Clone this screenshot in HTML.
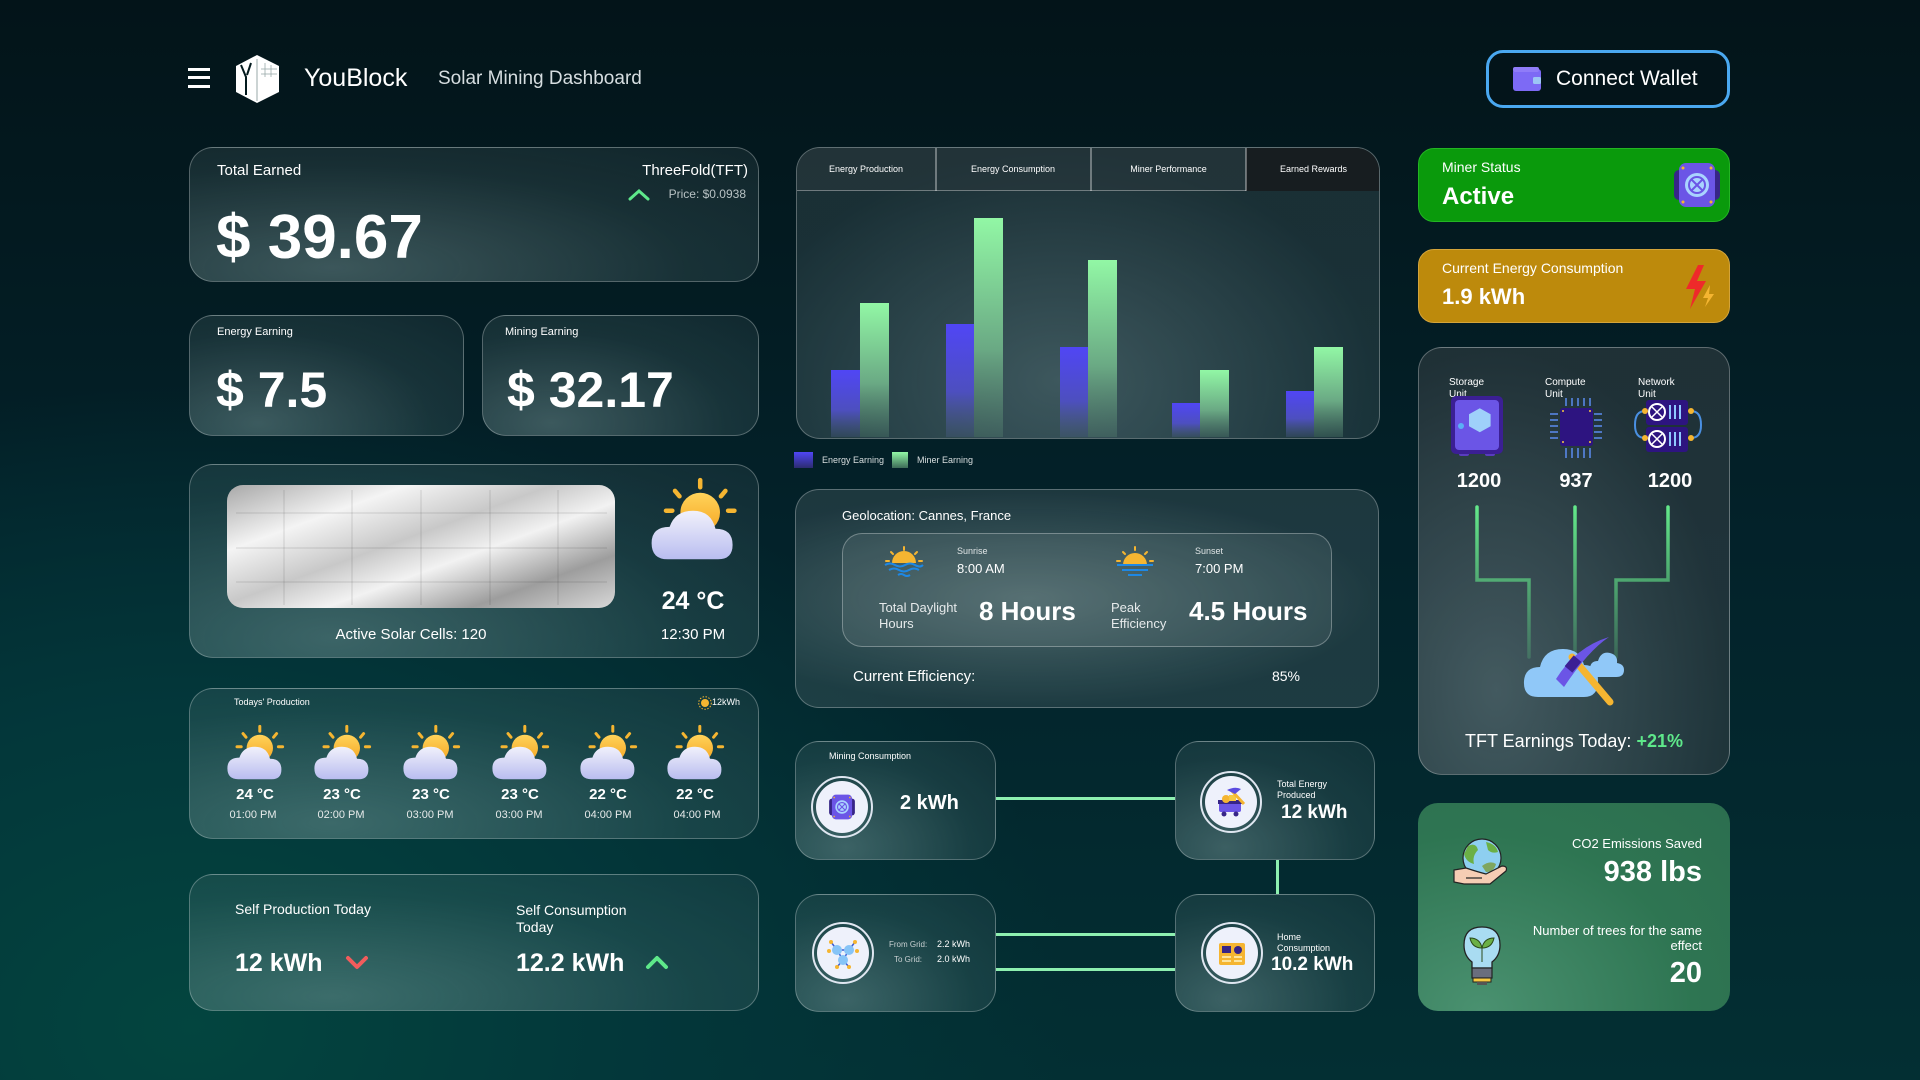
<!DOCTYPE html>
<html><head><meta charset="utf-8">
<style>
*{margin:0;padding:0;box-sizing:border-box}
body{width:1920px;height:1080px;overflow:hidden;font-family:"Liberation Sans",sans-serif;color:#fff;
background:radial-gradient(ellipse 1100px 800px at 10% 95%,#03453f 0%,#03373a 40%,rgba(3,30,36,0) 80%),linear-gradient(180deg,#031419 0%,#03222a 50%,#032f33 100%);position:relative}
.a{position:absolute}
.t{position:absolute;line-height:1;white-space:nowrap}
.card{position:absolute;border-radius:24px;border:1.5px solid rgba(255,255,255,0.28);
background:radial-gradient(ellipse at 25% 90%,rgba(140,170,170,0.42),rgba(120,150,150,0.18) 60%,rgba(100,120,125,0.14));}
.b{font-weight:700}
.ring{position:absolute;width:62px;height:62px;border-radius:50%;border:2px solid #dfe6f0;display:flex;align-items:center;justify-content:center}
.ring>div{width:52px;height:52px;border-radius:50%;background:#eef1fb;display:flex;align-items:center;justify-content:center}
.ln{position:absolute;background:#8ef0b0}
</style></head><body>
<svg width="0" height="0" style="position:absolute">
<defs>
<linearGradient id="sg" x1="0" y1="0" x2="0" y2="1"><stop offset="0" stop-color="#ffd35a"/><stop offset="1" stop-color="#f5a623"/></linearGradient>
<linearGradient id="cg" x1="0" y1="0" x2="0" y2="1"><stop offset="0" stop-color="#f1f1fb"/><stop offset="1" stop-color="#b9bdf0"/></linearGradient>
<symbol id="wx" viewBox="0 0 100 100">
<g stroke="#f5b531" stroke-width="5" stroke-linecap="round">
<line x1="58" y1="4" x2="58" y2="12"/><line x1="30" y1="16" x2="35" y2="22"/><line x1="86" y1="16" x2="81" y2="22"/><line x1="20" y1="38" x2="27" y2="38"/><line x1="96" y1="38" x2="89" y2="38"/></g>
<circle cx="58" cy="40" r="22" fill="url(#sg)"/>
<path d="M22 92 Q4 92 4 74 Q4 56 24 56 Q30 38 50 38 Q70 38 75 58 Q94 58 94 76 Q94 92 78 92 Z" fill="url(#cg)"/>
</symbol>
<symbol id="miner" viewBox="0 0 50 50">
<rect x="2" y="10" width="46" height="30" rx="5" fill="#372587"/>
<rect x="7" y="3" width="36" height="44" rx="7" fill="#6b55e6"/>
<circle cx="25" cy="25" r="12" fill="#a9d3ff"/><circle cx="25" cy="25" r="8" fill="none" stroke="#6b55e6" stroke-width="2"/>
<path d="M19 19 L31 31 M31 19 L19 31" stroke="#6b55e6" stroke-width="2"/>
<g fill="#f5b531"><circle cx="11" cy="8" r="1.5"/><circle cx="39" cy="8" r="1.5"/><circle cx="11" cy="42" r="1.5"/><circle cx="39" cy="42" r="1.5"/></g>
</symbol>
<linearGradient id="bl" x1="0" y1="0" x2="0" y2="1"><stop offset="0" stop-color="#5046f5"/><stop offset="0.6" stop-color="#4d4fbf"/><stop offset="1" stop-color="#4c5e8a" stop-opacity="0.3"/></linearGradient>
<linearGradient id="gr" x1="0" y1="0" x2="0" y2="1"><stop offset="0" stop-color="#92f7a5"/><stop offset="0.6" stop-color="#6aa984"/><stop offset="1" stop-color="#5b8a75" stop-opacity="0.3"/></linearGradient>
</defs></svg>

<!-- header -->
<div class="a" style="left:188px;top:68px;width:22px;height:2.5px;background:#fff"></div>
<div class="a" style="left:188px;top:76px;width:22px;height:2.5px;background:#fff"></div>
<div class="a" style="left:188px;top:85px;width:22px;height:2.5px;background:#fff"></div>
<svg class="a" style="left:235px;top:55px" width="45" height="48" viewBox="0 0 45 48">
<path d="M22 0 L44 11 L44 37 L22 48 L1 37 L1 11 Z" fill="#fff"/>
<path d="M6 10 L11 22 L11 40 M16 8 L12 20" stroke="#031a1e" stroke-width="2" fill="none"/>
<line x1="22" y1="4" x2="22" y2="46" stroke="#9aa" stroke-width="1"/>
<g stroke="#9aa" stroke-width="0.8"><line x1="30" y1="8" x2="30" y2="22"/><line x1="36" y1="10" x2="36" y2="22"/><line x1="26" y1="14" x2="42" y2="14"/><line x1="26" y1="19" x2="42" y2="19"/></g>
</svg>
<div class="t" style="left:304px;top:66px;font-size:25px;font-weight:500">YouBlock</div>
<div class="t" style="left:438px;top:69px;font-size:19px;color:#d6dde0;font-weight:300">Solar Mining Dashboard</div>
<div class="a" style="left:1486px;top:50px;width:244px;height:58px;border:3px solid #4aa8f0;border-radius:17px;background:#03141a"></div>
<svg class="a" style="left:1513px;top:67px" width="28" height="24" viewBox="0 0 28 24"><rect x="0" y="2" width="28" height="22" rx="3" fill="#7d6af5"/><rect x="0" y="0" width="26" height="5" rx="2" fill="#8f7cf8"/><rect x="20" y="10" width="8" height="7" rx="1.5" fill="#9cc5f5"/></svg>
<div class="t" style="left:1556px;top:68px;font-size:21px;font-weight:500">Connect Wallet</div>

<!-- total earned -->
<div class="card" style="left:189px;top:147px;width:570px;height:135px"></div>
<div class="t" style="left:217px;top:163px;font-size:15px">Total Earned</div>
<div class="t" style="left:600px;width:148px;text-align:right;top:163px;font-size:15px">ThreeFold(TFT)</div>
<svg class="a" style="left:628px;top:189px" width="22" height="12" viewBox="0 0 22 12"><path d="M2 10 L11 2 L20 10" stroke="#5ee88a" stroke-width="3" fill="none" stroke-linecap="round"/></svg>
<div class="t" style="left:600px;width:146px;text-align:right;top:188px;font-size:12px;color:#b8c2c4">Price: $0.0938</div>
<div class="t b" style="left:216px;top:207px;font-size:62px">$ 39.67</div>

<div class="card" style="left:189px;top:315px;width:275px;height:121px"></div>
<div class="t" style="left:217px;top:327px;font-size:11px">Energy Earning</div>
<div class="t b" style="left:216px;top:365px;font-size:50px">$ 7.5</div>
<div class="card" style="left:482px;top:315px;width:277px;height:121px"></div>
<div class="t" style="left:505px;top:327px;font-size:11px">Mining Earning</div>
<div class="t b" style="left:507px;top:365px;font-size:50px">$ 32.17</div>

<!-- solar -->
<div class="card" style="left:189px;top:464px;width:570px;height:194px"></div>
<div class="a" style="left:227px;top:485px;width:388px;height:123px;border-radius:16px;overflow:hidden;background:linear-gradient(160deg,#a8a8a8 0%,#f4f4f4 25%,#c8c8c8 45%,#f2f2f2 60%,#9d9d9d 80%,#d8d8d8 100%)">
<svg width="388" height="123" style="position:absolute;left:0;top:0"><g stroke="rgba(0,0,0,0.13)" stroke-width="1"><line x1="57" y1="5" x2="57" y2="120"/><line x1="125" y1="5" x2="125" y2="120"/><line x1="194" y1="5" x2="194" y2="120"/><line x1="263" y1="5" x2="263" y2="120"/><line x1="331" y1="5" x2="331" y2="120"/><line x1="9" y1="28" x2="380" y2="28"/><line x1="9" y1="63" x2="380" y2="63"/><line x1="9" y1="97" x2="380" y2="97"/></g></svg></div>
<div class="t" style="left:311px;width:200px;text-align:center;top:627px;font-size:15px">Active Solar Cells: 120</div>
<svg class="a" style="left:648px;top:474px" width="90" height="95"><use href="#wx"/></svg>
<div class="t" style="left:620px;width:146px;text-align:center;top:589px;font-size:25px;font-weight:600">24 °C</div>
<div class="t" style="left:620px;width:146px;text-align:center;top:627px;font-size:15px">12:30 PM</div>

<!-- production -->
<div class="card" style="left:189px;top:688px;width:570px;height:151px"></div>
<div class="t" style="left:234px;top:698px;font-size:9px">Todays' Production</div>
<svg class="a" style="left:698px;top:696px" width="14" height="14" viewBox="0 0 14 14"><circle cx="7" cy="7" r="4" fill="#f5b531"/><circle cx="7" cy="7" r="6.3" fill="none" stroke="#f5b531" stroke-dasharray="1.5 1.5"/></svg>
<div class="t" style="left:712px;top:698px;font-size:9px">12kWh</div>
<svg class="a" style="left:225px;top:722px" width="60" height="64"><use href="#wx"/></svg>
<svg class="a" style="left:312px;top:722px" width="60" height="64"><use href="#wx"/></svg>
<svg class="a" style="left:401px;top:722px" width="60" height="64"><use href="#wx"/></svg>
<svg class="a" style="left:490px;top:722px" width="60" height="64"><use href="#wx"/></svg>
<svg class="a" style="left:578px;top:722px" width="60" height="64"><use href="#wx"/></svg>
<svg class="a" style="left:665px;top:722px" width="60" height="64"><use href="#wx"/></svg>
<div class="t b" style="left:215px;width:80px;text-align:center;top:787px;font-size:15px">24 °C</div>
<div class="t b" style="left:302px;width:80px;text-align:center;top:787px;font-size:15px">23 °C</div>
<div class="t b" style="left:391px;width:80px;text-align:center;top:787px;font-size:15px">23 °C</div>
<div class="t b" style="left:480px;width:80px;text-align:center;top:787px;font-size:15px">23 °C</div>
<div class="t b" style="left:568px;width:80px;text-align:center;top:787px;font-size:15px">22 °C</div>
<div class="t b" style="left:655px;width:80px;text-align:center;top:787px;font-size:15px">22 °C</div>
<div class="t" style="left:213px;width:80px;text-align:center;top:810px;font-size:11px;color:#e6eaea">01:00 PM</div>
<div class="t" style="left:301px;width:80px;text-align:center;top:810px;font-size:11px;color:#e6eaea">02:00 PM</div>
<div class="t" style="left:390px;width:80px;text-align:center;top:810px;font-size:11px;color:#e6eaea">03:00 PM</div>
<div class="t" style="left:479px;width:80px;text-align:center;top:810px;font-size:11px;color:#e6eaea">03:00 PM</div>
<div class="t" style="left:568px;width:80px;text-align:center;top:810px;font-size:11px;color:#e6eaea">04:00 PM</div>
<div class="t" style="left:657px;width:80px;text-align:center;top:810px;font-size:11px;color:#e6eaea">04:00 PM</div>

<!-- self -->
<div class="card" style="left:189px;top:874px;width:570px;height:137px"></div>
<div class="t" style="left:235px;top:902px;font-size:14px">Self Production Today</div>
<div class="t" style="left:516px;top:902px;font-size:14px;line-height:17px;white-space:normal;width:130px">Self Consumption Today</div>
<div class="t b" style="left:235px;top:951px;font-size:25px">12 kWh</div>
<svg class="a" style="left:345px;top:955px" width="24" height="15" viewBox="0 0 24 15"><path d="M3 3 L12 12 L21 3" stroke="#f25c5c" stroke-width="4" fill="none" stroke-linecap="round" stroke-linejoin="round"/></svg>
<div class="t b" style="left:516px;top:951px;font-size:25px">12.2 kWh</div>
<svg class="a" style="left:645px;top:955px" width="24" height="15" viewBox="0 0 24 15"><path d="M3 12 L12 3 L21 12" stroke="#5ee88a" stroke-width="4" fill="none" stroke-linecap="round" stroke-linejoin="round"/></svg>

<!-- chart -->
<div class="card" style="left:796px;top:147px;width:584px;height:292px;overflow:hidden;background:radial-gradient(ellipse at 45% 80%,rgba(120,145,150,0.5),rgba(70,90,95,0.35) 70%)">
<div class="a" style="left:0;top:0;width:584px;height:43px;border-bottom:1.5px solid rgba(255,255,255,0.35);background:rgba(40,55,60,0.6)"></div>
<div class="a" style="left:449px;top:0;width:135px;height:43px;background:#171d20"></div>
<div class="a" style="left:138px;top:0;width:1.5px;height:43px;background:rgba(255,255,255,0.35)"></div>
<div class="a" style="left:293px;top:0;width:1.5px;height:43px;background:rgba(255,255,255,0.35)"></div>
<div class="a" style="left:448px;top:0;width:1.5px;height:43px;background:rgba(255,255,255,0.35)"></div>
<div class="t" style="left:0;width:138px;text-align:center;top:17px;font-size:9px">Energy Production</div>
<div class="t" style="left:139px;width:154px;text-align:center;top:17px;font-size:9px">Energy Consumption</div>
<div class="t" style="left:294px;width:155px;text-align:center;top:17px;font-size:9px">Miner Performance</div>
<div class="t" style="left:449px;width:135px;text-align:center;top:17px;font-size:9px">Earned Rewards</div>
</div>
<svg class="a" style="left:796px;top:147px" width="584" height="292">
<rect x="35" y="223" width="29" height="67" fill="url(#bl)"/><rect x="64" y="156" width="29" height="134" fill="url(#gr)"/>
<rect x="150" y="177" width="28" height="113" fill="url(#bl)"/><rect x="178" y="71" width="29" height="219" fill="url(#gr)"/>
<rect x="264" y="200" width="28" height="90" fill="url(#bl)"/><rect x="292" y="113" width="29" height="177" fill="url(#gr)"/>
<rect x="376" y="256" width="28" height="34" fill="url(#bl)"/><rect x="404" y="223" width="29" height="67" fill="url(#gr)"/>
<rect x="490" y="244" width="28" height="46" fill="url(#bl)"/><rect x="518" y="200" width="29" height="90" fill="url(#gr)"/>
</svg>
<div class="a" style="left:794px;top:452px;width:19px;height:16px;background:linear-gradient(#5046f5,#2c2c70)"></div>
<div class="t" style="left:822px;top:456px;font-size:9px;color:#d9dfe0">Energy Earning</div>
<div class="a" style="left:892px;top:452px;width:16px;height:16px;background:linear-gradient(#92f7a5,#3d6c58)"></div>
<div class="t" style="left:917px;top:456px;font-size:9px;color:#d9dfe0">Miner Earning</div>

<!-- geo -->
<div class="card" style="left:795px;top:489px;width:584px;height:219px;background:radial-gradient(ellipse at 40% 50%,rgba(150,170,170,0.5),rgba(90,110,115,0.3) 70%)"></div>
<div class="t" style="left:842px;top:509px;font-size:13px">Geolocation: Cannes, France</div>
<div class="a" style="left:842px;top:533px;width:490px;height:114px;border-radius:20px;border:1.5px solid rgba(255,255,255,0.3);background:rgba(150,165,168,0.15)"></div>
<svg class="a" style="left:884px;top:545px" width="40" height="32" viewBox="0 0 40 32"><g stroke="#f5b531" stroke-width="2" stroke-linecap="round"><line x1="20" y1="2" x2="20" y2="5"/><line x1="7" y1="7" x2="9" y2="9"/><line x1="33" y1="7" x2="31" y2="9"/><line x1="2" y1="16" x2="5" y2="16"/><line x1="35" y1="16" x2="38" y2="16"/></g><path d="M8 18 A12 12 0 0 1 32 18 Z" fill="#f5b531"/><g stroke="#1e88e5" stroke-width="2" fill="none"><path d="M1 20 q5 -3 10 0 t10 0 t10 0 t8 0"/><path d="M5 25 q5 -3 10 0 t10 0 t10 0"/><path d="M14 30 q3 -2 6 0 t6 0"/></g></svg>
<div class="t" style="left:957px;top:547px;font-size:9px;color:#e0e5e6">Sunrise</div>
<div class="t" style="left:957px;top:562px;font-size:13px">8:00 AM</div>
<svg class="a" style="left:1116px;top:545px" width="38" height="32" viewBox="0 0 38 32"><g stroke="#f5b531" stroke-width="2" stroke-linecap="round"><line x1="19" y1="2" x2="19" y2="5"/><line x1="7" y1="7" x2="9" y2="9"/><line x1="31" y1="7" x2="29" y2="9"/><line x1="1" y1="16" x2="4" y2="16"/><line x1="34" y1="16" x2="37" y2="16"/></g><path d="M7 20 A12 12 0 0 1 31 20 Z" fill="#f5b531"/><g stroke="#1e88e5" stroke-width="2"><line x1="1" y1="20" x2="37" y2="20"/><line x1="6" y1="25" x2="32" y2="25"/><line x1="12" y1="30" x2="26" y2="30"/></g></svg>
<div class="t" style="left:1195px;top:547px;font-size:9px;color:#e0e5e6">Sunset</div>
<div class="t" style="left:1195px;top:562px;font-size:13px">7:00 PM</div>
<div class="t" style="left:879px;top:600px;font-size:13px;line-height:16px;color:#e6eaeb">Total Daylight<br>Hours</div>
<div class="t" style="left:979px;top:598px;font-size:26px;font-weight:600">8 Hours</div>
<div class="t" style="left:1111px;top:600px;font-size:13px;line-height:16px;color:#e6eaeb">Peak<br>Efficiency</div>
<div class="t" style="left:1189px;top:598px;font-size:26px;font-weight:600">4.5 Hours</div>
<div class="t" style="left:853px;top:669px;font-size:15px">Current Efficiency:</div>
<div class="t" style="left:1230px;width:70px;text-align:right;top:669px;font-size:14px">85%</div>

<!-- flows -->
<div class="ln" style="left:996px;top:797px;width:179px;height:3px"></div>
<div class="ln" style="left:1276px;top:860px;width:3px;height:34px"></div>
<div class="ln" style="left:996px;top:933px;width:179px;height:3px"></div>
<div class="ln" style="left:996px;top:968px;width:179px;height:3px"></div>
<div class="card" style="left:795px;top:741px;width:201px;height:119px"></div>
<div class="card" style="left:1175px;top:741px;width:200px;height:119px"></div>
<div class="card" style="left:795px;top:894px;width:201px;height:118px"></div>
<div class="card" style="left:1175px;top:894px;width:200px;height:118px"></div>
<div class="t" style="left:829px;top:752px;font-size:9px">Mining Consumption</div>
<div class="ring" style="left:811px;top:776px"><div><svg width="28" height="28"><use href="#miner"/></svg></div></div>
<div class="t b" style="left:900px;top:793px;font-size:20px">2 kWh</div>
<div class="ring" style="left:1200px;top:771px"><div><svg width="36" height="36" viewBox="0 0 36 36"><rect x="6" y="18" width="22" height="10" rx="2" fill="#6b55e6"/><rect x="5" y="16" width="24" height="4" fill="#372587"/><circle cx="11" cy="30" r="2.5" fill="#372587"/><circle cx="23" cy="30" r="2.5" fill="#372587"/><circle cx="13" cy="15" r="4" fill="#f5b531"/><rect x="16" y="11" width="7" height="6" fill="#f5c842"/><path d="M18 6 L31 20" stroke="#f5b531" stroke-width="3"/><path d="M14 6 Q22 2 28 5 L22 10 Z" fill="#5b4be0"/></svg></div></div>
<div class="t" style="left:1277px;top:779px;font-size:9px;line-height:11px">Total Energy<br>Produced</div>
<div class="t b" style="left:1281px;top:803px;font-size:19px">12 kWh</div>
<div class="ring" style="left:812px;top:922px"><div><svg width="40" height="40" viewBox="0 0 40 40"><g stroke="#3b5bd4" stroke-width="1.5"><line x1="14" y1="17" x2="26" y2="17"/><line x1="14" y1="17" x2="20" y2="27"/><line x1="26" y1="17" x2="20" y2="27"/><line x1="14" y1="17" x2="8" y2="9"/><line x1="26" y1="17" x2="32" y2="9"/><line x1="20" y1="27" x2="14" y2="34"/><line x1="20" y1="27" x2="26" y2="34"/></g><circle cx="14" cy="17" r="5" fill="#86c4f7"/><circle cx="26" cy="17" r="5" fill="#86c4f7"/><circle cx="20" cy="27" r="5" fill="#86c4f7"/><g fill="#f5b531"><circle cx="8" cy="9" r="2"/><circle cx="32" cy="9" r="2"/><circle cx="14" cy="34" r="2"/><circle cx="26" cy="34" r="2"/><circle cx="6" cy="18" r="2"/><circle cx="34" cy="18" r="2"/></g></svg></div></div>
<div class="t" style="left:889px;top:941px;font-size:8px;color:#c8d0d2">From Grid:</div>
<div class="t" style="left:937px;top:940px;font-size:9px">2.2 kWh</div>
<div class="t" style="left:894px;top:956px;font-size:8px;color:#c8d0d2">To Grid:</div>
<div class="t" style="left:937px;top:955px;font-size:9px">2.0 kWh</div>
<div class="ring" style="left:1201px;top:922px"><div><svg width="36" height="36" viewBox="0 0 36 36"><rect x="5" y="8" width="26" height="22" rx="2" fill="#f5b531"/><rect x="8" y="11" width="9" height="7" fill="#372587"/><circle cx="24" cy="15" r="4" fill="#372587"/><g stroke="#fff3c4" stroke-width="1.5"><line x1="8" y1="22" x2="17" y2="22"/><line x1="8" y1="26" x2="17" y2="26"/><line x1="20" y1="22" x2="28" y2="22"/><line x1="20" y1="26" x2="28" y2="26"/></g></svg></div></div>
<div class="t" style="left:1277px;top:932px;font-size:9px;line-height:11px">Home<br>Consumption</div>
<div class="t b" style="left:1271px;top:955px;font-size:19px">10.2 kWh</div>

<!-- right column -->
<div class="a" style="left:1418px;top:148px;width:312px;height:74px;border-radius:16px;background:#0a9a0c;border:1px solid #23b523"></div>
<div class="t" style="left:1442px;top:160px;font-size:14px">Miner Status</div>
<div class="t b" style="left:1442px;top:185px;font-size:24px">Active</div>
<svg class="a" style="left:1672px;top:158px" width="50" height="54"><use href="#miner"/></svg>
<div class="a" style="left:1418px;top:249px;width:312px;height:74px;border-radius:16px;background:#bd8a0c;border:1px solid #d4a43a"></div>
<div class="t" style="left:1442px;top:261px;font-size:14px">Current Energy Consumption</div>
<div class="t b" style="left:1442px;top:286px;font-size:22px">1.9 kWh</div>
<svg class="a" style="left:1684px;top:265px" width="32" height="44" viewBox="0 0 32 44"><path d="M14 0 L2 24 L11 24 L6 44 L22 16 L13 16 L20 0 Z" fill="#ee2a2a"/><path d="M26 20 L19 33 L24 33 L21 42 L30 29 L25 29 Z" fill="#f5b531"/></svg>

<div class="card" style="left:1418px;top:347px;width:312px;height:428px;background:radial-gradient(ellipse at 25% 80%,rgba(110,125,130,0.6),rgba(55,65,70,0.55) 70%)"></div>
<div class="t" style="left:1449px;top:377px;font-size:10px;line-height:12px">Storage<br>Unit</div>
<div class="t" style="left:1545px;top:377px;font-size:10px;line-height:12px">Compute<br>Unit</div>
<div class="t" style="left:1638px;top:377px;font-size:10px;line-height:12px">Network<br>Unit</div>
<svg class="a" style="left:1451px;top:396px" width="53" height="64" viewBox="0 0 53 64"><rect x="8" y="54" width="10" height="6" rx="2" fill="#5a3cc0"/><rect x="34" y="54" width="10" height="6" rx="2" fill="#5a3cc0"/><rect x="0" y="0" width="52" height="58" rx="5" fill="#3b1f94"/><rect x="4" y="4" width="44" height="50" rx="4" fill="#6b55e6"/><path d="M29 14 L38 19 L38 29 L29 34 L20 29 L20 19 Z" fill="#9fd0fa" transform="translate(0,-1) scale(1.2) translate(-5,-3)"/><circle cx="10" cy="30" r="3" fill="#5ab0f5"/></svg>
<svg class="a" style="left:1548px;top:396px" width="56" height="64" viewBox="0 0 56 64"><g stroke="#5b8cf0" stroke-width="1.5"><line x1="18" y1="2" x2="18" y2="10"/><line x1="24" y1="2" x2="24" y2="10"/><line x1="30" y1="2" x2="30" y2="10"/><line x1="36" y1="2" x2="36" y2="10"/><line x1="42" y1="2" x2="42" y2="10"/><line x1="18" y1="52" x2="18" y2="62"/><line x1="24" y1="52" x2="24" y2="62"/><line x1="30" y1="52" x2="30" y2="62"/><line x1="36" y1="52" x2="36" y2="62"/><line x1="42" y1="52" x2="42" y2="62"/><line x1="2" y1="18" x2="10" y2="18"/><line x1="2" y1="24" x2="10" y2="24"/><line x1="2" y1="30" x2="10" y2="30"/><line x1="2" y1="36" x2="10" y2="36"/><line x1="2" y1="42" x2="10" y2="42"/><line x1="46" y1="18" x2="54" y2="18"/><line x1="46" y1="24" x2="54" y2="24"/><line x1="46" y1="30" x2="54" y2="30"/><line x1="46" y1="36" x2="54" y2="36"/><line x1="46" y1="42" x2="54" y2="42"/></g><rect x="12" y="12" width="33" height="38" rx="3" fill="#2d1480"/><g fill="#f5c842"><circle cx="15" cy="15" r="1"/><circle cx="42" cy="15" r="1"/><circle cx="15" cy="46" r="1"/><circle cx="42" cy="46" r="1"/></g></svg>
<svg class="a" style="left:1633px;top:398px" width="70" height="56" viewBox="0 0 70 56"><path d="M12 13 Q2 13 2 27 Q2 40 12 40" stroke="#4a90e2" stroke-width="2" fill="none"/><path d="M58 13 Q68 13 68 27 Q68 40 58 40" stroke="#4a90e2" stroke-width="2" fill="none"/><rect x="13" y="2" width="42" height="25" rx="3" fill="#2d1480"/><rect x="13" y="29" width="42" height="25" rx="3" fill="#2d1480"/><g fill="none" stroke="#fff" stroke-width="2"><circle cx="24" cy="14" r="8"/><circle cx="24" cy="41" r="8"/></g><g stroke="#fff" stroke-width="1.5"><path d="M19 9 L29 19 M29 9 L19 19 M19 36 L29 46 M29 36 L19 46"/></g><g stroke="#8ec8ff" stroke-width="2"><line x1="37" y1="7" x2="37" y2="21"/><line x1="42" y1="7" x2="42" y2="21"/><line x1="47" y1="7" x2="47" y2="21"/><line x1="37" y1="34" x2="37" y2="48"/><line x1="42" y1="34" x2="42" y2="48"/><line x1="47" y1="34" x2="47" y2="48"/></g><g fill="#f5b531"><circle cx="12" cy="13" r="3"/><circle cx="58" cy="13" r="3"/><circle cx="12" cy="40" r="3"/><circle cx="58" cy="40" r="3"/></g></svg>
<div class="t b" style="left:1439px;width:80px;text-align:center;top:471px;font-size:20px">1200</div>
<div class="t b" style="left:1536px;width:80px;text-align:center;top:471px;font-size:20px">937</div>
<div class="t b" style="left:1630px;width:80px;text-align:center;top:471px;font-size:20px">1200</div>
<svg class="a" style="left:1418px;top:347px" width="312" height="428">
<defs><linearGradient id="lg" gradientUnits="userSpaceOnUse" x1="0" y1="160" x2="0" y2="320"><stop offset="0" stop-color="#63e88a"/><stop offset="1" stop-color="#63e88a" stop-opacity="0.15"/></linearGradient></defs>
<g stroke="url(#lg)" stroke-width="3.5" fill="none" stroke-linecap="round"><path d="M59 160 L59 233 L111 233 L111 310" /><path d="M157 160 L157 310"/><path d="M250 160 L250 233 L198 233 L198 310"/></g>
<g transform="translate(80,0)">
<path d="M40 350 Q25 350 26 334 Q27 320 42 320 Q46 302 65 302 Q82 302 86 318 Q100 318 100 334 Q100 350 86 350 Z" fill="#90c8f8"/>
<path d="M100 330 Q92 330 92 322 Q92 314 100 314 Q103 304 112 306 Q120 308 119 316 Q126 317 126 323 Q126 330 118 330 Z" fill="#90c8f8"/>
<path d="M74 310 L112 355" stroke="#f5b531" stroke-width="7" stroke-linecap="round"/>
<path d="M58 332 Q78 300 111 290 Q90 304 66 340 Z" fill="#6b55e6"/>
<rect x="70" y="310" width="10" height="14" fill="#3b1f94" transform="rotate(40 75 317)"/>
</g>
</svg>
<div class="t" style="left:1418px;width:312px;text-align:center;top:732px;font-size:18px">TFT Earnings Today: <span style="color:#5ee88a;font-weight:700">+21%</span></div>

<div class="a" style="left:1418px;top:803px;width:312px;height:208px;border-radius:20px;background:radial-gradient(ellipse at 20% 100%,#4a9170,#2e7552 60%,#2c6e4f)"></div>
<svg class="a" style="left:1452px;top:838px" width="58" height="50" viewBox="0 0 58 50"><circle cx="30" cy="20" r="19" fill="#8ecff0" stroke="#222" stroke-width="1.2"/><path d="M16 8 Q24 4 26 12 Q20 18 22 26 Q14 24 12 16 Z" fill="#6bb046"/><path d="M34 4 Q44 6 46 14 Q40 16 36 12 Z" fill="#6bb046"/><path d="M30 28 Q38 22 44 26 Q42 34 34 34 Z" fill="#7fa660"/><path d="M2 32 L14 30 Q26 34 34 36 L50 28 Q56 28 54 33 L38 46 L12 46 L2 44 Z" fill="#f6cdb4" stroke="#222" stroke-width="1.2"/><line x1="14" y1="40" x2="30" y2="40" stroke="#222" stroke-width="1.2"/></svg>
<svg class="a" style="left:1462px;top:926px" width="40" height="60" viewBox="0 0 40 60"><path d="M20 1 Q38 1 38 19 Q38 30 30 36 L30 42 L10 42 L10 36 Q2 30 2 19 Q2 1 20 1 Z" fill="#a9dcf2" stroke="#222" stroke-width="1.3"/><path d="M20 36 L20 22 Q10 22 8 12 Q18 12 20 22 Q22 12 32 12 Q30 22 20 22" fill="#6bb046" stroke="#2b4a1a" stroke-width="1"/><rect x="10" y="42" width="20" height="10" fill="#6a6e7e" stroke="#222" stroke-width="1.2"/><rect x="11" y="52" width="18" height="4" fill="#f5c842" stroke="#222" stroke-width="1"/><rect x="15" y="56" width="10" height="3" fill="#555"/></svg>
<div class="t" style="left:1500px;width:202px;text-align:right;top:837px;font-size:13px">CO2 Emissions Saved</div>
<div class="t" style="left:1500px;width:202px;text-align:right;top:858px;font-size:29px;font-weight:600">938 lbs</div>
<div class="t" style="left:1500px;width:202px;text-align:right;top:923px;font-size:13px;line-height:15px;white-space:normal">Number of trees for the same effect</div>
<div class="t" style="left:1500px;width:202px;text-align:right;top:959px;font-size:29px;font-weight:600">20</div>
</body></html>
